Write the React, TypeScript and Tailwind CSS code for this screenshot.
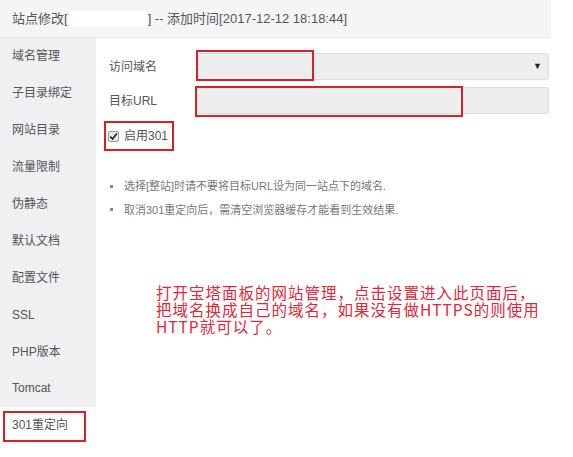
import React from 'react';

const menu = ['域名管理', '子目录绑定', '网站目录', '流量限制', '伪静态', '默认文档', '配置文件', 'SSL', 'PHP版本', 'Tomcat'];

const App: React.FC = () => {
  return (
    <div className="w-[573px] h-[457px] bg-white overflow-hidden font-['Liberation_Sans','Noto_Sans_CJK_SC',sans-serif] text-[#555]">
      <div className="w-[551px]">
        <div className="h-[38px] bg-[#f5f5f5] border-b border-[#e8e8e8] flex items-center pl-[12px] text-[13px] text-[#555]">
          <span>站点修改[</span>
          <span className="inline-block w-[80px] h-[16px] bg-white" />
          <span>] -- 添加时间[2017-12-12 18:18:44]</span>
        </div>
        <div className="flex">
          <div className="w-[96px] flex flex-col shrink-0">
            <div className="bg-[#f0f0f2]">
              {menu.map((m) => (
                <div key={m} className="h-[36.9px] flex items-center pl-[12px] text-[12px] text-[#555]">
                  {m}
                </div>
              ))}
            </div>
            <div className="relative h-[37px] flex items-center pl-[12px] text-[12px] text-[#555] bg-white">
              301重定向
              <div className="absolute left-[3px] top-[4px] w-[83px] h-[31px] border-2 border-[#d3222a]" />
            </div>
          </div>
          <div className="flex-1 relative pl-[13px] pt-[15px]">
            <div className="flex items-center h-[27px]">
              <div className="w-[87px] text-[12px]">访问域名</div>
              <div className="relative flex-1 h-[27px] bg-[#eeeeee] border border-[#dcdcdc] rounded-[3px] flex items-center justify-end pr-[6px] mr-[2px]">
                <span className="text-[9px] text-[#222]">▼</span>
                <div className="absolute left-[-1px] top-[-4px] w-[118px] h-[31px] border-2 border-[#d3222a]" />
              </div>
            </div>
            <div className="flex items-center h-[27px] mt-[7px]">
              <div className="w-[87px] text-[12px]">目标URL</div>
              <div className="relative flex-1 h-[27px] bg-[#eeeeee] border border-[#dcdcdc] rounded-[3px] mr-[2px]">
                <div className="absolute left-[-2px] top-[-2px] w-[268px] h-[31px] border-2 border-[#d3222a]" />
              </div>
            </div>
            <div className="relative flex items-center h-[30px] mt-[7px] pl-[1px] text-[12px]">
              <span className="w-[11px] h-[11px] border border-[#999] bg-[#e8e8e8] rounded-[2px] flex items-center justify-center mr-[5px] ml-[-2px]">
                <svg viewBox="0 0 10 10" className="w-[9px] h-[9px]">
                  <path d="M1.5 5.2 L4 7.8 L8.7 1.8" fill="none" stroke="#222" strokeWidth="1.8" />
                </svg>
              </span>
              <span>启用301</span>
              <div className="absolute left-[-5px] top-[0px] w-[70px] h-[30px] border-2 border-[#d3222a]" />
            </div>
            <ul className="mt-[27px] text-[11px] text-[#777] flex flex-col gap-[7px]">
              <li className="flex items-center">
                <span className="w-[3px] h-[3px] bg-[#888] mr-[11px] ml-[1px]" />
                选择[整站]时请不要将目标URL设为同一站点下的域名.
              </li>
              <li className="flex items-center">
                <span className="w-[3px] h-[3px] bg-[#888] mr-[11px] ml-[1px]" />
                取消301重定向后，需清空浏览器缓存才能看到生效结果.
              </li>
            </ul>
            <div className="mt-[66px] ml-[47px] text-[15.5px] leading-[17px] text-[#e0283a] font-['Noto_Sans_CJK_SC',sans-serif] tracking-[1px] whitespace-nowrap">
              <div className="h-[17px]">打开宝塔面板的网站管理，点击设置进入此页面后，</div>
              <div className="h-[17px]">把域名换成自己的域名，如果没有做HTTPS的则使用</div>
              <div className="h-[17px]">HTTP就可以了。</div>
            </div>
          </div>
        </div>
      </div>
    </div>
  );
};

export default App;
